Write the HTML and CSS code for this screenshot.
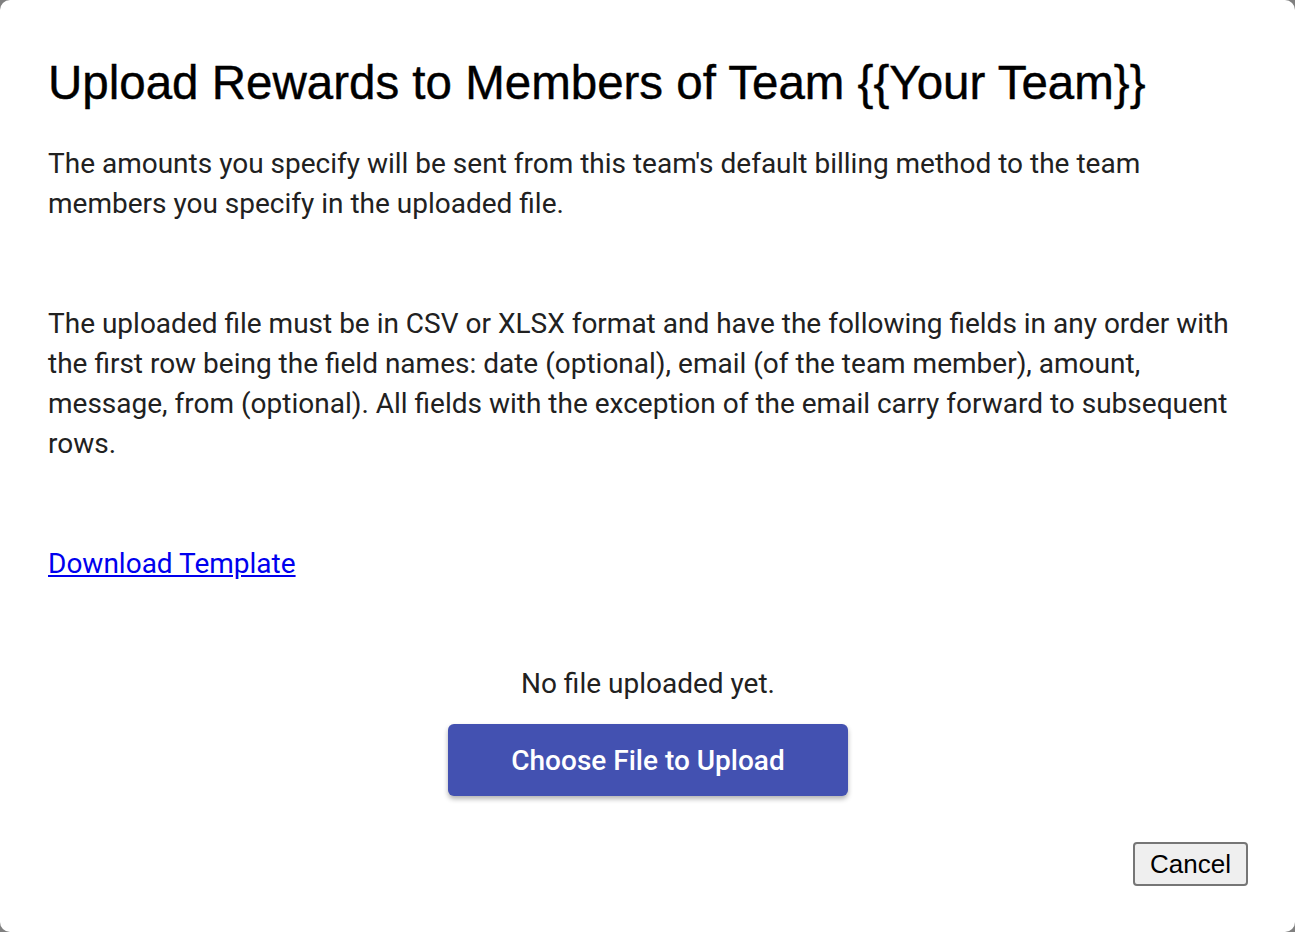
FILE: index.html
```html
<!doctype html>
<html>
<head>
  <link rel="stylesheet" href="styles.css">
</head>
<body>
  <div class="dialog">
    <h1 class="title">Upload Rewards to Members of Team {{Your Team}}</h1>
    <p class="text">The amounts you specify will be sent from this team's default billing method to the team members you specify in the uploaded file.</p>
    <p class="text">The uploaded file must be in CSV or XLSX format and have the following fields in any order with the first row being the field names: date (optional), email (of the team member), amount, message, from (optional). All fields with the exception of the email carry forward to subsequent rows.</p>
    <p class="text"><a href="#" class="link">Download Template</a></p>
    <div class="upload">
      <div class="status">No file uploaded yet.</div>
      <button class="choose">Choose File to Upload</button>
    </div>
    <div class="actions">
      <button class="cancel">Cancel</button>
    </div>
  </div>
</body>
</html>
```
FILE: styles.css
```css
html, body {
  margin: 0;
  padding: 0;
  height: 100%;
  background-color: #808080;
  overflow: hidden;
}
.dialog {
  box-sizing: border-box;
  height: 932px;
  background-color: #fff;
  border-radius: 10px;
  padding: 52px 47px 0 48px;
}
.title {
  margin: 0 0 30px 0;
  font-family: "Liberation Sans", Arial, sans-serif;
  font-size: 47.5px;
  font-weight: normal;
  line-height: 62px;
  color: #000;
  -webkit-text-stroke: 0.4px #000;
}
.text {
  margin: 0 0 80px 0;
  font-family: Roboto, sans-serif;
  font-size: 28px;
  line-height: 40px;
  color: #212121;
}
.link {
  color: #0000ee;
  text-decoration: underline;
}
.upload {
  display: flex;
  flex-direction: column;
  align-items: center;
  gap: 20px;
}
.status {
  font-family: Roboto, sans-serif;
  font-size: 28px;
  line-height: 40px;
  color: #212121;
}
.choose {
  width: 400px;
  height: 72px;
  border: none;
  border-radius: 6px;
  background-color: #4351b1;
  color: #fff;
  font-family: Roboto, sans-serif;
  font-size: 28px;
  font-weight: 500;
  box-shadow: 0 3px 5px rgba(0,0,0,0.3);
}
.actions {
  display: flex;
  justify-content: flex-end;
  margin-top: 46px;
}
.cancel {
  width: 115px;
  height: 44px;
  padding: 0;
  border: 2px solid #767676;
  border-radius: 4px;
  background-color: #efefef;
  font-family: "Liberation Sans", Arial, sans-serif;
  font-size: 26px;
  color: #000;
}
```
